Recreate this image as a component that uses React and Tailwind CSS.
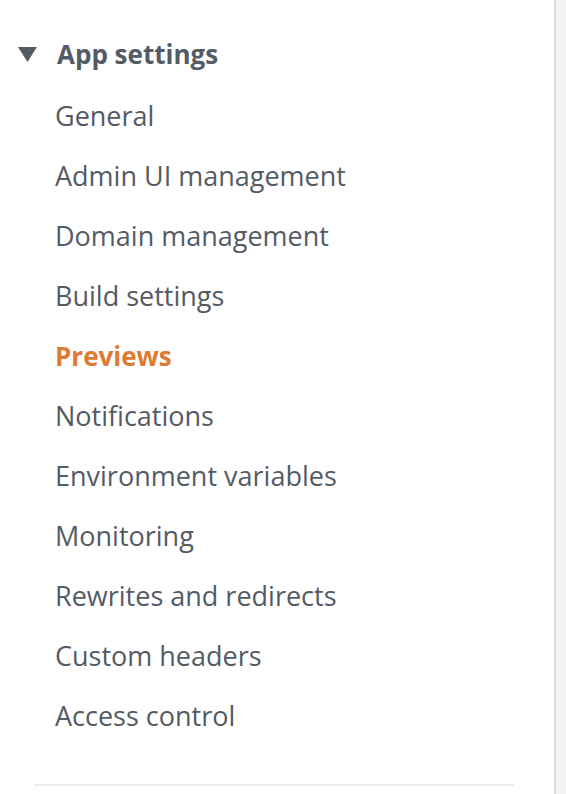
const items = [
  "General",
  "Admin UI management",
  "Domain management",
  "Build settings",
  "Previews",
  "Notifications",
  "Environment variables",
  "Monitoring",
  "Rewrites and redirects",
  "Custom headers",
  "Access control",
];

export default function App() {
  return (
    <div className="flex h-[794px] w-[566px] overflow-hidden bg-[#f2f3f3] font-['Open_Sans',sans-serif]">
      <nav className="h-full w-[556px] shrink-0 border-r-2 border-[#d5dbdb] bg-white">
        <div className="mt-[34px] flex h-[40px] items-center">
          <svg className="ml-[18px] h-[15px] w-[19px] fill-[#545b64]" viewBox="0 0 19 15">
            <path d="M0 0h19L9.5 15z" />
          </svg>
          <span className="ml-[20px] text-[26px] font-bold text-[#545b64]">App settings</span>
        </div>
        <ul className="mt-[12px] pl-[55px]">
          {items.map((item) => (
            <li
              key={item}
              className={
                item === "Previews"
                  ? "text-[26px] leading-[60px] font-bold text-[#df7a33]"
                  : "text-[27px] leading-[60px] text-[#545b64]"
              }
            >
              {item}
            </li>
          ))}
        </ul>
        <div className="ml-[34px] mt-[38px] h-[2px] w-[480px] bg-[#eaeded]" />
      </nav>
    </div>
  );
}
